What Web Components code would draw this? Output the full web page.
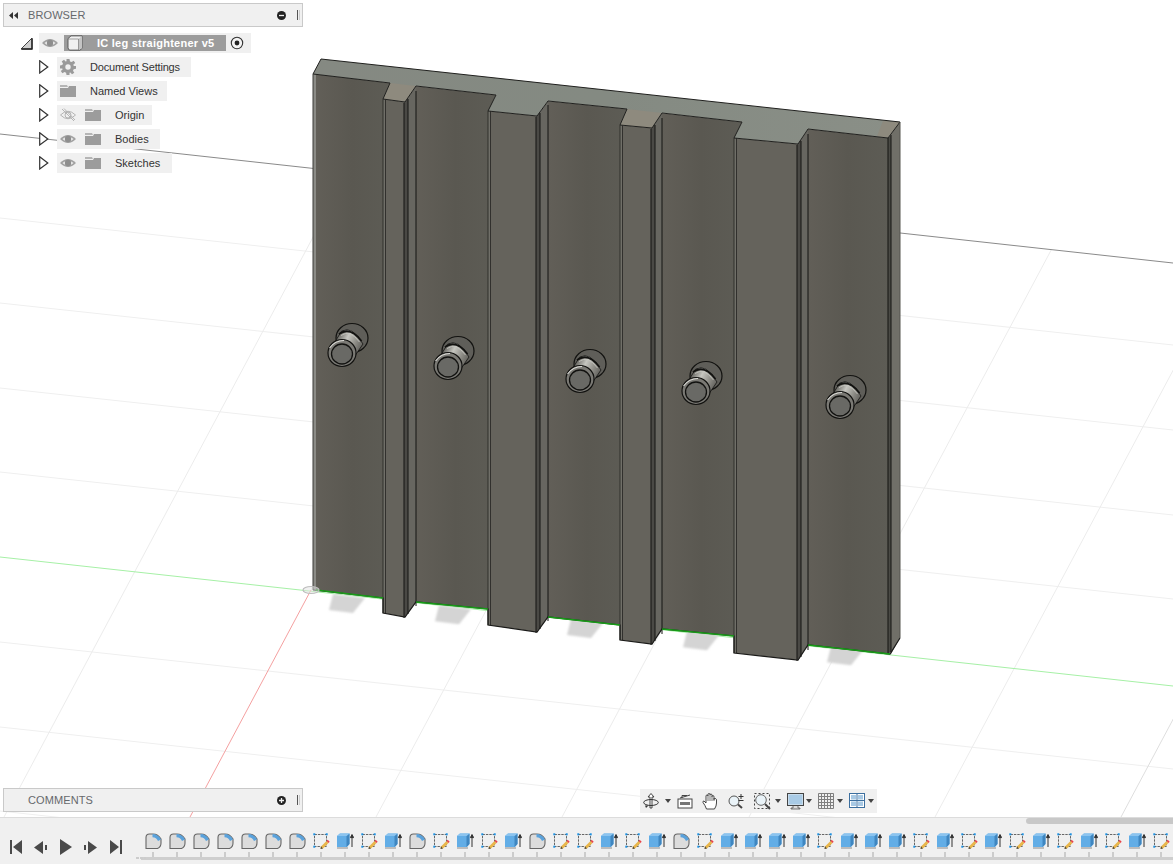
<!DOCTYPE html>
<html>
<head>
<meta charset="utf-8">
<title>IC leg straightener v5</title>
<style>
  html, body { margin: 0; height: 100%; overflow: hidden; background: #fff; }
  body { font-family: "Liberation Sans", Arial, sans-serif; }
</style>
</head>
<body>
<cad-app>
  <cad-scene slot="scene"></cad-scene>
  <cad-panel slot="panels" title="BROWSER" collapse>
    <tree-node root icons="eye" label="IC leg straightener v5"></tree-node>
    <tree-node icons="gear" label="Document Settings" track="-.18px"></tree-node>
    <tree-node icons="folder" label="Named Views" pad="9"></tree-node>
    <tree-node icons="eyeoff folder" label="Origin" pad="8"></tree-node>
    <tree-node icons="eye folder" label="Bodies"></tree-node>
    <tree-node icons="eye folder" label="Sketches" pad="12"></tree-node>
  </cad-panel>
  <cad-panel slot="panels" title="COMMENTS"></cad-panel>
  <nav-bar slot="nav"></nav-bar>
  <cad-timeline slot="timeline"></cad-timeline>
</cad-app>

<script>
// small svg icons shared by the panels
const ICONS = {
  eye: `<svg width="16" height="16" viewBox="0 0 16 16"><path d="M0 8Q8 0 16 8Q8 16 0 8Z" fill="#a2a2a2"/><path d="M2.5 8Q8 3 13.5 8Q8 13 2.5 8Z" fill="#f0f0f0"/><circle cx="8" cy="8" r="3.2" fill="#8e8e8e"/></svg>`,
  eyeoff: `<svg width="16" height="16" viewBox="0 0 16 16"><path d="M.5 8Q8 .5 15.5 8Q8 15.5 .5 8Z" fill="none" stroke="#b4b4b4"/><circle cx="8" cy="8" r="3" fill="none" stroke="#b4b4b4"/><path d="M2 2L14 14M4 1.5L15 13" stroke="#b4b4b4"/></svg>`,
  folder: `<svg width="16" height="16" viewBox="0 0 16 16"><path d="M0 2H7L8 4H0Z" fill="#b5b5b5"/><path d="M0 5H8L9 3H16V14H0Z" fill="#9c9c9c"/></svg>`,
  gear: `<svg width="16" height="16" viewBox="0 0 16 16"><path fill="#9a9a9a" fill-rule="evenodd" d="M6.5 0H9.5L10 2.4L11.6 3.1L13.7 1.8L15.2 4L13.4 5.6L13.7 7H16V9.8L13.7 10.2L13 11.7L14.3 13.8L12 15.3L10.4 13.5L9.5 13.8V16H6.5L6.1 13.7L4.5 13L2.4 14.3L.8 12L2.6 10.4L2.3 9.5H0V6.5L2.3 6.1L3 4.5L1.7 2.4L4 .8L5.6 2.6L6.5 2.3Z M8 5.3A2.7 2.7 0 1 0 8 10.7A2.7 2.7 0 1 0 8 5.3Z"/></svg>`,
  cube: `<svg width="16" height="16" viewBox="0 0 16 18" preserveAspectRatio="none"><path d="M4 1H15V15L13 17H3Q1 17 1 14V4Z" fill="#f1f1f1" stroke="#555"/><path d="M11.5 4.5L15 1V15L11.5 17Z" fill="#c4c4c4"/><path d="M1 4.5H11.5V17" fill="none" stroke="#777" stroke-width=".7"/></svg>`,
  radio: `<svg width="14" height="14" viewBox="0 0 14 14"><circle cx="7" cy="7" r="5.7" fill="#f4f4f4" stroke="#333" stroke-width="1.1"/><circle cx="7" cy="7" r="2.4" fill="#222"/></svg>`,
  arrow: `<svg width="10" height="14" viewBox="0 0 10 14"><path d="M.7 .8L8.8 7L.7 13Z" fill="#fff" stroke="#333" stroke-width="1.2"/></svg>`,
  arrowOpen: `<svg width="13" height="13" viewBox="0 0 13 13"><path d="M1 12L12 1V12Z" fill="#cfcfcf"/><path d="M1 12L12 1V12Z" fill="none" stroke="#444"/><path d="M1.5 12H12V1.5" fill="none" stroke="#222" stroke-width="1.4"/></svg>`
};

class CadApp extends HTMLElement {
  constructor() {
    super();
    this.attachShadow({ mode: 'open' });
    this.shadowRoot.innerHTML = `
      <style>
        :host { display: flex; flex-direction: column; width: 100vw; height: 100vh; }
        .stage { flex: 1; position: relative; overflow: hidden; }
        .panels { position: absolute; left: 3px; top: 3px; bottom: 5px; width: 300px;
                  display: flex; flex-direction: column; justify-content: space-between; }
        .nav { position: absolute; left: 640px; bottom: 4px; }
      </style>
      <div class="stage">
        <slot name="scene"></slot>
        <div class="panels"><slot name="panels"></slot></div>
        <div class="nav"><slot name="nav"></slot></div>
      </div>
      <slot name="timeline"></slot>`;
  }
}

class CadPanel extends HTMLElement {
  constructor() {
    super();
    this.attachShadow({ mode: 'open' });
  }
  connectedCallback() {
    const open = this.hasAttribute('collapse');
    this.shadowRoot.innerHTML = `
      <style>
        :host { display: block; font: 11px "Liberation Sans", Arial, sans-serif; }
        .bar { height: 22px; display: flex; align-items: center; background: #f0f0f0;
               border: 1px solid #c9c9c9; color: #66686c; box-sizing: content-box; }
        .rew { width: 24px; display: flex; padding-left: 5px; box-sizing: border-box; }
        .title { flex: 1; letter-spacing: .1px; }
        .btn { margin-right: 11px; display: flex; }
        .grip { width: 3px; height: 10px; margin-right: 2px; border-left: 1px solid #555; border-right: 1px solid #ccc; box-sizing: border-box; }
        .tree { display: flex; flex-direction: column; gap: 4px; padding-top: 6px; }
      </style>
      <div class="bar">
        <span class="rew">${open ? `<svg width="9" height="7" viewBox="0 0 9 7"><path d="M4 0V7L0 3.5ZM9 0V7L5 3.5Z" fill="#333"/></svg>` : ''}</span>
        <span class="title">${this.getAttribute('title')}</span>
        <svg class="btn" width="9" height="9" viewBox="0 0 9 9"><circle cx="4.5" cy="4.5" r="4.5" fill="#222"/><path d="M2 4.5H7${open ? '' : 'M4.5 2V7'}" stroke="#f0f0f0" stroke-width="1.3"/></svg>
        <span class="grip"></span>
      </div>
      ${open ? '<div class="tree"><slot></slot></div>' : ''}`;
  }
}

class TreeNode extends HTMLElement {
  constructor() {
    super();
    this.attachShadow({ mode: 'open' });
  }
  connectedCallback() {
    const root = this.hasAttribute('root');
    const label = this.getAttribute('label');
    const names = this.getAttribute('icons').split(' ');
    const icons = names.map((n, i) => `<span class="ic${i === names.length - 1 ? ' end' : ''}">${ICONS[n]}</span>`).join('');
    const body = root
      ? `${icons}<span class="sel"><span class="cube">${ICONS.cube}</span><b>${label}</b></span><span class="radio">${ICONS.radio}</span>`
      : `${icons}<span class="txt">${label}</span>`;
    this.shadowRoot.innerHTML = `
      <style>
        :host { display: flex; height: 20px; align-items: center; color: #333; padding-left: ${root ? 17 : 36}px; }
        .arrow { display: flex; width: ${root ? 19 : 18}px; }
        .pill { display: flex; align-items: center; height: 20px; background: #f0f0f0; padding: 0 ${this.getAttribute('pad') || 11}px 0 3px; }
        .ic { display: flex; width: 16px; margin-right: 9px; }
        .ic.end { margin-right: ${root ? 6 : 14}px; }
        .txt { white-space: nowrap; letter-spacing: ${this.getAttribute('track') || 'normal'}; }
        .sel { display: flex; align-items: center; width: 162px; height: 16px; background: #9c9c9c; color: #fff; box-sizing: border-box; padding-left: 3px; }
        .cube { display: flex; width: 30px; }
        b { font-weight: bold; white-space: nowrap; letter-spacing: .25px; }
        .radio { display: flex; margin-left: 4px; margin-right: -4px; }
      </style>
      <span class="arrow">${root ? ICONS.arrowOpen : ICONS.arrow}</span>
      <span class="pill">${body}</span>`;
  }
}

// the 3d view: ground grid and the part, all in screen coordinates
class CadScene extends HTMLElement {
  constructor() {
    super();
    this.attachShadow({ mode: 'open' });
  }
  connectedCallback() {
    const poly = (pts, fill, extra = '') => `<polygon points="${pts.map(p => p.join(',')).join(' ')}" fill="${fill}" ${extra}/>`;
    const line = (a, b, c, w = 1) => `<line x1="${a[0]}" y1="${a[1]}" x2="${b[0]}" y2="${b[1]}" stroke="${c}" stroke-width="${w}"/>`;

    let grid = '';
    [218, 303, 388, 472, 642, 727, 811].forEach(y0 => {
      grid += line([0, y0], [1173, y0 + 127], '#efefef');
    });
    [4, 190, 376, 562, 749, 935, 1121].forEach(x0 => {
      const xt = (x0 + 364) / 1.0586, yt = 134 + .11 * xt;
      const end = x0 === 190 ? [311, 590] : [x0, 817];
      grid += line([xt, yt], end, x0 === 1121 ? '#dedede' : '#ececec');
    });
    grid += line([0, 134], [1173, 263], '#8a8a8a');
    grid += line([0, 557], [1173, 686], '#a6f0a6');
    grid += line([311, 590], [190, 817], '#f4a0a0');

    const pins = [[342, 353], [448, 366], [580, 379], [696, 391], [840, 405]];
    const shadows = pins.map(([x]) => {
      const dx = x - 342, dy = dx * .105;
      const s = [[333, 594], [365, 598], [353, 613], [329, 610]].map(p => [p[0] + dx, p[1] + dy]);
      return poly(s, '#d4d4d4', 'filter="url(#soft)"');
    }).join('');

    const top = [[321, 59], [900, 122], [888, 138], [808, 129], [798, 144], [734, 138], [742, 122], [662, 113], [652, 128], [620, 125], [627, 109], [548, 101], [537, 116], [488, 111], [496, 95], [416, 86], [405, 102], [383, 99], [390, 83], [313, 74]];
    const bottom = [[313, 590], [383, 598], [383, 613], [405, 617], [416, 602], [488, 609], [488, 625], [537, 632], [548, 617], [620, 625], [620, 640], [652, 644], [662, 629], [734, 636], [734, 653], [798, 660], [808, 645], [890, 654], [900, 638]];

    const panels = [
      [[315, 74], [390, 83], [384, 99], [384, 598], [315, 590]],
      [[415, 86], [496, 95], [489, 111], [489, 609], [415, 602]],
      [[547, 101], [627, 109], [621, 125], [621, 625], [547, 617]],
      [[661, 113], [742, 122], [735, 138], [735, 636], [661, 629]],
      [[807, 129], [889, 138], [889, 654], [807, 645]]
    ];
    const ribs = [
      { l: 383, r: 405, s: 416, t: [99, 102, 86], b: [613, 617, 602] },
      { l: 488, r: 537, s: 548, t: [111, 116, 101], b: [625, 632, 617] },
      { l: 620, r: 652, s: 662, t: [125, 128, 113], b: [640, 644, 629] },
      { l: 734, r: 798, s: 808, t: [138, 144, 129], b: [653, 660, 645] }
    ];

    let model = panels.map(p => poly(p, 'url(#face)')).join('');
    model += poly([[313, 74], [316, 74], [316, 590], [313, 590]], '#8b8b86');
    ribs.forEach(r => {
      model += poly([[r.l, r.t[0]], [r.r, r.t[1]], [r.r, r.b[1]], [r.l, r.b[0]]], '#65635c');
      model += poly([[r.l, r.t[0]], [r.l + 2.5, r.t[0]], [r.l + 2.5, r.b[0]], [r.l, r.b[0]]], '#706f68');
      model += poly([[r.r, r.t[1]], [r.s, r.t[2]], [r.s, r.b[2]], [r.r, r.b[1]]], '#676660');
      model += poly([[r.r - 1, r.t[1]], [r.r + 3, r.t[1] - 5], [r.r + 3, r.b[1] - 5], [r.r - 1, r.b[1]]], '#4a4945');
      [r.l, r.l + 2.5].forEach(x => { model += line([x, r.t[0]], [x, r.b[0]], '#2a2a27', .9); });
      [r.r - 1, r.r + 3, r.s].forEach(x => { model += line([x, r.t[1] - (x - r.r)], [x, r.b[1] - (x - r.r)], '#141412', 1); });
    });
    // right end of the plate
    model += poly([[888, 138], [900, 122], [900, 638], [891, 654]], '#706f68');
    model += poly([[888, 138], [891, 135], [891, 652], [888, 654]], '#4a4a45');
    model += line([888, 138], [888, 654], '#141412') + line([891, 135], [891, 652], '#141412');
    // top of the plate
    model += poly(top, 'url(#topface)');
    model += poly([[383, 99], [390, 83], [416, 86], [405, 102]], '#8e8a7e');
    model += poly([[620, 125], [627, 109], [662, 113], [652, 128]], '#8e8a7e');
    model += poly([[883, 121], [900, 122], [888, 138], [877, 136]], '#8e8a7e');
    model += `<polygon points="${top.map(p => p.join(',')).join(' ')}" fill="none" stroke="#20201e" stroke-linejoin="round"/>`;
    model += line([313, 74], [313, 590], '#3a3a36');
    model += line([900, 122], [900, 638], '#55554f');
    model += `<polyline points="${bottom.map(p => p.join(',')).join(' ')}" fill="none" stroke="#1a1a18" stroke-width="1.2"/>`;
    // bright green where the axis runs along the foot of the recessed faces
    [[[316, 590], [383, 598]], [[416, 602], [488, 609]], [[548, 617], [620, 625]], [[662, 629], [734, 636]], [[808, 645], [890, 654]]].forEach(s => {
      model += line(s[0], s[1], '#179c17', 1.3);
    });

    const pin = ([x, y]) => `
      <g transform="translate(${x} ${y})" stroke="#121210">
        <ellipse cx="10" cy="-15" rx="16" ry="14.5" fill="#5f5e59" stroke-width="1.2"/>
        <path d="M-11.5 -4L-.4 -21.9Q10 -28 21 -9L11.5 5Z" fill="url(#shaft)" stroke-width=".8"/>
        <path d="M-3 -19Q8 -27 19.5 -12" fill="none" stroke="#121210" stroke-width="1.8"/>
        <path d="M-1 -17.5Q8 -24 17.5 -11" fill="none" stroke="#c4c4be" stroke-width=".9"/>
        <ellipse cx="0" cy="0" rx="14" ry="13.5" fill="#7a7974" stroke-width="1.2"/>
        <ellipse cx="0" cy="1" rx="10.5" ry="10" fill="#696965" stroke-width="1.3"/>
        <path d="M-12.5 -5Q-7 -12.5 2 -12.5" fill="none" stroke="#dededa" stroke-width="1.1"/>
      </g>`;

    this.shadowRoot.innerHTML = `
      <style>
        :host { display: block; width: 100%; height: 100%; background: #fff; }
        svg { display: block; }
      </style>
      <svg width="1173" height="817" viewBox="0 0 1173 817">
        <defs>
          <filter id="soft" x="-20%" y="-20%" width="140%" height="140%"><feGaussianBlur stdDeviation="1.1"/></filter>
          <linearGradient id="face" x1="0" y1="0" x2="1" y2="0">
            <stop offset="0" stop-color="#625f58"/><stop offset=".5" stop-color="#5a5851"/><stop offset="1" stop-color="#5d5c55"/>
          </linearGradient>
          <linearGradient id="topface" x1="0" y1="0" x2="1" y2="0">
            <stop offset="0" stop-color="#858982"/><stop offset=".5" stop-color="#848a82"/><stop offset="1" stop-color="#8a8f87"/>
          </linearGradient>
          <linearGradient id="shaft" gradientUnits="userSpaceOnUse" x1="-10" y1="-7" x2="20" y2="8">
            <stop offset="0" stop-color="#5c5b56"/><stop offset=".3" stop-color="#c6c6c0"/><stop offset=".6" stop-color="#8a8983"/><stop offset="1" stop-color="#3f3e3a"/>
          </linearGradient>
        </defs>
        ${grid}
        ${shadows}
        ${model}
        ${pins.map(pin).join('')}
        <ellipse cx="311" cy="590" rx="8" ry="3.5" fill="#e4e4e4" fill-opacity=".5" stroke="#bdbdbd" stroke-width="1.2"/>
      </svg>`;
  }
}

class NavBar extends HTMLElement {
  constructor() {
    super();
    this.attachShadow({ mode: 'open' });
    const caret = (x) => `<svg class="c" style="left:${x}px" width="6" height="4" viewBox="0 0 6 4"><path d="M0 0H6L3 4Z" fill="#444"/></svg>`;
    const tool = (x, w, h, inner) => `<svg class="t" style="left:${x}px" width="${w}" height="${h}" viewBox="0 0 ${w} ${h}">${inner}</svg>`;
    let gridLines = '';
    for (let i = 0; i <= 15; i += 3) {
      gridLines += `<path d="M${i + .5} .5V15.5M.5 ${i + .5}H15.5" stroke="#7f7f7f"/>`;
    }
    this.shadowRoot.innerHTML = `
      <style>
        :host { display: block; width: 237px; height: 24px; background: #f0f0f0; position: relative; }
        svg { position: absolute; }
        .t { top: 4px; }
        .c { top: 10px; }
      </style>
      ${tool(3, 16, 16, `<path d="M8 .5L5 4H7V15H9V4H11Z" fill="#fff" stroke="#333" stroke-width=".9"/><ellipse cx="8" cy="9.5" rx="7.3" ry="3" fill="none" stroke="#333"/><path d="M2 12.5L5.5 12.5L3 15Z" fill="#333"/>`)}
      ${caret(25)}
      ${tool(37, 16, 16, `<rect x="1" y="6" width="14" height="9" fill="#fff" stroke="#444"/><rect x="3" y="9" width="10" height="3" fill="#777"/><path d="M3 5L13 2M5 5V2.5H10" fill="none" stroke="#444"/>`)}
      ${tool(62, 16, 17, `<path d="M4.5 16Q3 12 1 9.5Q.5 8 2 8L4 10V3Q4 2 5 2T6 3V1.5Q6 .5 7 .5T8 1.5V2Q8 1 9 1T10 2.5V3.5Q10 2.5 11 2.5T12 4V6.5Q12 5.5 13 5.5T14.5 6.5V10Q14.5 13 12.5 16Z" fill="#fff" stroke="#333" stroke-width=".9"/><path d="M6 3V8M8 2V8M10 3V8M12 5V8" stroke="#333" stroke-width=".7"/>`)}
      ${tool(88, 17, 16, `<circle cx="6" cy="8" r="5" fill="#eaf3f8" stroke="#555"/><path d="M10 11.5L14 15" stroke="#444" stroke-width="2"/><path d="M13 1V6M10.5 3.5H15.5M10.5 7.5H15.5" stroke="#333"/>`)}
      ${tool(114, 17, 17, `<rect x=".5" y=".5" width="15" height="15" fill="none" stroke="#444" stroke-dasharray="2 2"/><circle cx="7" cy="7" r="5.3" fill="#eaf3f8" stroke="#666"/><path d="M11 11L16 16" stroke="#444" stroke-width="2"/>`)}
      ${caret(135)}
      ${tool(147, 17, 17, `<rect x=".5" y=".5" width="16" height="12" fill="#c8dcec" stroke="#444"/><rect x="2" y="2" width="13" height="9" fill="#a9cbe6"/><path d="M6 13V15H4V16H13V15H11V13" fill="#ddd" stroke="#555" stroke-width=".8"/>`)}
      ${caret(166)}
      ${tool(178, 16, 16, gridLines)}
      ${caret(197)}
      ${tool(209, 16, 15, `<rect x=".5" y=".5" width="15" height="14" fill="#fff" stroke="#3c6f9f"/><rect x="2" y="2" width="5" height="4.5" fill="#a8c9e4"/><rect x="9" y="2" width="5" height="4.5" fill="#a8c9e4"/><rect x="2" y="8.5" width="5" height="4.5" fill="#a8c9e4"/><rect x="9" y="8.5" width="5" height="4.5" fill="#a8c9e4"/><path d="M8 1V14M1 7.5H15" stroke="#3c6f9f"/>`)}
      ${caret(228)}`;
  }
}

class CadTimeline extends HTMLElement {
  constructor() {
    super();
    this.attachShadow({ mode: 'open' });
    const fillet = `<svg width="17" height="17" viewBox="0 0 17 17"><path d="M1 15.5V4.5Q1 1 4.5 1H8Q13 1 16 6V10Q16 14 12.5 15.5Z" fill="#dcdcdc" stroke="#666" stroke-width="1.1"/><path d="M7.5 1Q13 1 16 6.5L13 8Q11.5 4.5 7.5 4.2Z" fill="#5aa2dc"/></svg>`;
    const sketch = `<svg width="17" height="17" viewBox="0 0 17 17"><rect x="1.5" y="1.5" width="12" height="12" fill="none" stroke="#666" stroke-dasharray="2.4 1"/><g fill="#1b8fe0"><rect x=".3" y=".3" width="2" height="2"/><rect x="12.7" y=".3" width="2" height="2"/><rect x=".3" y="12.7" width="2" height="2"/></g><path d="M8 13.5L13.5 8L15.5 10L10 15.5L7.5 16Z" fill="#e9b64a"/><path d="M13.5 8L14.7 6.8L16.7 8.8L15.5 10Z" fill="#e8434a"/><path d="M7.5 16L8 13.5L10 15.5Z" fill="#444"/></svg>`;
    const solid = `<svg width="17" height="17" viewBox="0 0 17 17"><path d="M0 14H11V16H0Z" fill="#bdbdbd"/><path d="M0 3L3 .5H12.5V11L10 14H0Z" fill="#62ade6"/><path d="M9.5 3L12.5 .5V11L9.5 14Z" fill="#3f86c0"/><path d="M0 3L3 .5H12.5L9.5 3Z" fill="#8cc4ef"/><path d="M15 14V2.5M13.4 4.6L15 1.5L16.6 4.6Z" stroke="#333" fill="#333" stroke-width="1"/></svg>`;
    const seq = 'fffffffsbsbfsbsbfssbsbfsbbbbsbbbsbsbsbsbsbs';
    const kinds = { f: fillet, s: sketch, b: solid };
    const items = [...seq].map(k => `<span class="it">${kinds[k]}<i></i></span>`).join('');
    this.shadowRoot.innerHTML = `
      <style>
        :host { display: block; height: 47px; background: #f0f0f0; border-top: 1px solid #dcdcdc; box-sizing: border-box; position: relative; overflow: hidden; }
        .scroll { position: absolute; right: 0; top: 0; width: 147px; height: 6px; background: #c8c8c8; border-radius: 4px 0 0 4px; }
        .row { display: flex; height: 100%; }
        .play { width: 141px; display: block; position: relative; flex: none; }
        .play svg { position: absolute; top: 21px; left: 9px; }
        .dash { position: absolute; left: 136px; top: 39px; width: 10px; height: 2px; background: repeating-linear-gradient(90deg, #ccc 0 3px, transparent 3px 4px); }
        .items { display: flex; flex: 1; padding-top: 15px; height: 24px; border-bottom: 3px solid #cecece; }
        .it { display: flex; flex-direction: column; align-items: center; flex: none; width: 24px; }
        .it svg { display: block; margin-left: 1px; }
        .it i { display: block; width: 2px; height: 5px; margin-top: 2px; background: #ccc; }
      </style>
      <div class="scroll"></div>
      <div class="row">
        <div class="play">
          <svg width="116" height="16" viewBox="0 0 116 16" fill="#4a4a4a">
            <path d="M1 1H3V15H1ZM13 1V15L4 8Z"/>
            <path d="M34 2V15L25 8.5ZM36 6H38V11H36Z"/>
            <path d="M51 0L63 8L51 16Z"/>
            <path d="M75 6H77V11H75ZM79 2V15L88 8.5Z"/>
            <path d="M101 1V15L110 8ZM111 1H113V15H111Z"/>
          </svg>
          <span class="dash"></span>
        </div>
        <div class="items">${items}</div>
      </div>`;
  }
}

customElements.define('cad-app', CadApp);
customElements.define('cad-panel', CadPanel);
customElements.define('tree-node', TreeNode);
customElements.define('cad-scene', CadScene);
customElements.define('nav-bar', NavBar);
customElements.define('cad-timeline', CadTimeline);
</script>
</body>
</html>
